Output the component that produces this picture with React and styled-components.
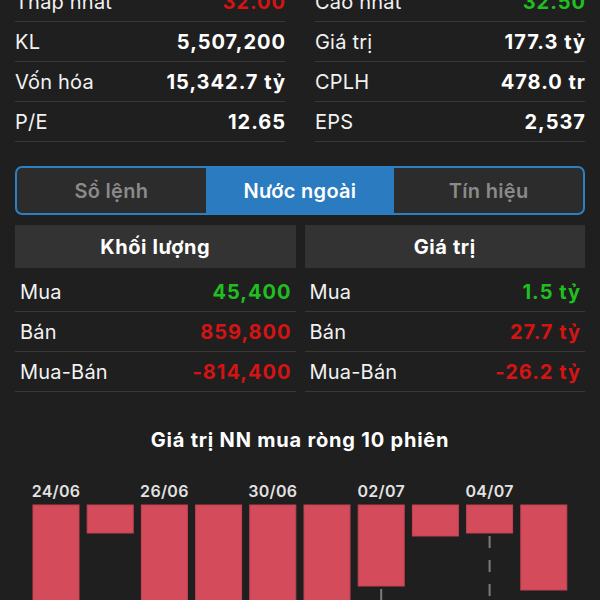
import React from "react";
import styled, { createGlobalStyle } from "styled-components";

const Global = createGlobalStyle`
  html, body { margin: 0; padding: 0; background: #1f1f1f; }
  body { font-family: Inter, "Noto Sans", "Liberation Sans", sans-serif; color: #fff; overflow: hidden; }
`;

const Page = styled.div`
  width: 600px;
  height: 600px;
  overflow: hidden;
  box-sizing: border-box;
  padding: 0 15px;
  background: #1f1f1f;
`;

const Stats = styled.div`
  display: grid;
  grid-template-columns: 1fr 1fr;
  column-gap: 30px;
  margin-top: -18px;
`;

const Column = styled.div`
  display: flex;
  flex-direction: column;
`;

const StatRow = styled.div`
  height: 40px;
  box-sizing: border-box;
  border-bottom: 1px solid #383838;
  display: flex;
  align-items: center;
  justify-content: space-between;
  font-size: 20px;
  padding: 0 ${(p) => p.$pad || 0}px;
`;

const Label = styled.span`
  font-weight: 400;
  color: #f2f2f2;
  letter-spacing: 0.2px;
`;

const colors = { up: "#1fbf1f", down: "#d41414", plain: "#ffffff" };

const Value = styled.span`
  font-weight: 700;
  letter-spacing: 1px;
  margin-right: -1px;
  color: ${(p) => colors[p.$tone || "plain"]};
`;

const Tabs = styled.div`
  margin-top: 24px;
  height: 49px;
  box-sizing: border-box;
  border: 2px solid #2c7fc2;
  border-radius: 7px;
  overflow: hidden;
  display: grid;
  grid-template-columns: repeat(3, 1fr);
  background: #2c2c2d;
`;

const Tab = styled.div`
  display: flex;
  align-items: center;
  justify-content: center;
  font-size: 20px;
  font-weight: 600;
  letter-spacing: 0.3px;
  color: ${(p) => (p.$active ? "#ffffff" : "#8a8a8a")};
  background: ${(p) => (p.$active ? "#2a7bbf" : "transparent")};
`;

const Tables = styled.div`
  margin-top: 10px;
  display: grid;
  grid-template-columns: 1fr 1fr;
  column-gap: 9px;
`;

const Table = styled.div`
  display: flex;
  flex-direction: column;
`;

const Header = styled.div`
  height: 43px;
  background: #333333;
  display: flex;
  align-items: center;
  justify-content: center;
  font-size: 20px;
  font-weight: 700;
  letter-spacing: 0.6px;
  margin-bottom: 4px;
`;

const Title = styled.div`
  margin-top: 36px;
  text-align: center;
  font-size: 20px;
  line-height: 24px;
  font-weight: 700;
  letter-spacing: 0.8px;
`;

const ChartSvg = styled.svg`
  display: block;
  margin: 8px -15px 0;
  width: 600px;
  height: 140px;
`;

const BarLabel = styled.text`
  font-family: Inter, "Noto Sans", sans-serif;
  font-size: 16px;
  font-weight: 600;
  letter-spacing: 0.3px;
  fill: #e2e2e2;
`;

const bars = [
  { label: "24/06", bottom: 160 },
  { bottom: 73 },
  { label: "26/06", bottom: 160 },
  { bottom: 160 },
  { label: "30/06", bottom: 160 },
  { bottom: 160 },
  { label: "02/07", bottom: 126, dash: true },
  { bottom: 76 },
  { label: "04/07", bottom: 73, dash: true },
  { bottom: 130 },
];

function Chart() {
  const top = 45;
  return (
    <ChartSvg viewBox="0 0 600 140">
      {bars.map((b, i) => {
        const x = 33 + i * 54.2;
        const cx = x + 23;
        return (
          <g key={i}>
            {b.label && (
              <BarLabel x={cx} y={37} textAnchor="middle">
                {b.label}
              </BarLabel>
            )}
            {b.dash && (
              <line
                x1={cx}
                x2={cx}
                y1={b.bottom + 3}
                y2={140}
                stroke="#7c7c7c"
                strokeWidth="2"
                strokeDasharray="12 12"
              />
            )}
            <rect
              x={x}
              y={top}
              width={46}
              height={b.bottom - top}
              fill="#d44b5b"
              stroke="#c74353"
              strokeWidth="1"
            />
          </g>
        );
      })}
    </ChartSvg>
  );
}

const leftStats = [
  ["Thấp nhất", "32.00", "down"],
  ["KL", "5,507,200"],
  ["Vốn hóa", "15,342.7 tỷ"],
  ["P/E", "12.65"],
];
const rightStats = [
  ["Cao nhất", "32.50", "up"],
  ["Giá trị", "177.3 tỷ"],
  ["CPLH", "478.0 tr"],
  ["EPS", "2,537"],
];

const tables = [
  {
    title: "Khối lượng",
    rows: [
      ["Mua", "45,400", "up"],
      ["Bán", "859,800", "down"],
      ["Mua-Bán", "-814,400", "down"],
    ],
  },
  {
    title: "Giá trị",
    rows: [
      ["Mua", "1.5 tỷ", "up"],
      ["Bán", "27.7 tỷ", "down"],
      ["Mua-Bán", "-26.2 tỷ", "down"],
    ],
  },
];

export default function App() {
  return (
    <>
      <Global />
      <Page>
        <Stats>
          {[leftStats, rightStats].map((col, ci) => (
            <Column key={ci}>
              {col.map(([l, v, t]) => (
                <StatRow key={l}>
                  <Label>{l}</Label>
                  <Value $tone={t}>{v}</Value>
                </StatRow>
              ))}
            </Column>
          ))}
        </Stats>
        <Tabs>
          <Tab>Sổ lệnh</Tab>
          <Tab $active>Nước ngoài</Tab>
          <Tab>Tín hiệu</Tab>
        </Tabs>
        <Tables>
          {tables.map((t) => (
            <Table key={t.title}>
              <Header>{t.title}</Header>
              {t.rows.map(([l, v, tone]) => (
                <StatRow key={l} $pad={5}>
                  <Label>{l}</Label>
                  <Value $tone={tone}>{v}</Value>
                </StatRow>
              ))}
            </Table>
          ))}
        </Tables>
        <Title>Giá trị NN mua ròng 10 phiên</Title>
        <Chart />
      </Page>
    </>
  );
}
